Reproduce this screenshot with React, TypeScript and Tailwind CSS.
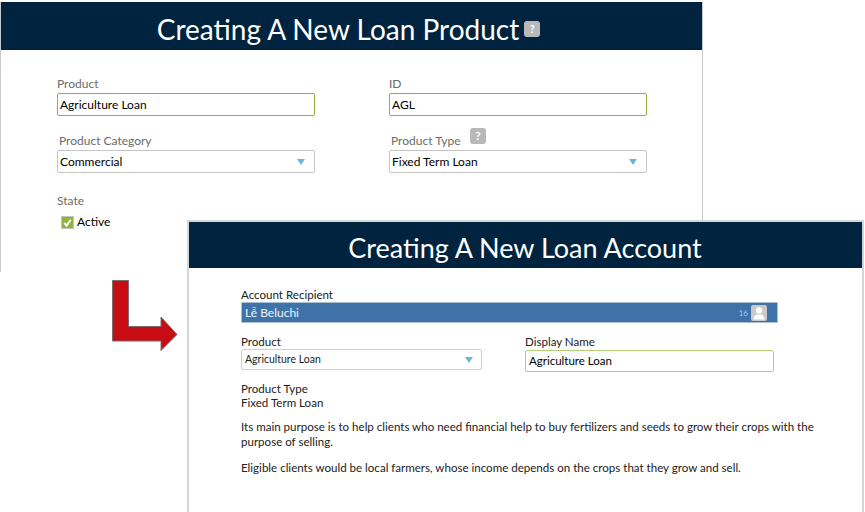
function Caret() {
  return <span className="h-0 w-0 border-x-[4.5px] border-t-[6px] border-x-transparent border-t-[#6db5da]" />;
}

function Help({ className }: { className: string }) {
  return (
    <span className={`flex items-center justify-center rounded-[3px] bg-[#b9b9b9] font-bold text-white ${className}`}>?</span>
  );
}

function Label({ children, className = "" }: { children: React.ReactNode; className?: string }) {
  return <div className={`h-[18px] text-[12px] leading-[18px] text-[#6b6b6b] ${className}`}>{children}</div>;
}

function TextBox({ value }: { value: string }) {
  return (
    <div className="flex h-[23px] items-center rounded-[2px] border border-[#8fb53c] bg-white px-[2px] text-[12px] text-black">
      {value}
    </div>
  );
}

function SelectBox({ value }: { value: string }) {
  return (
    <div className="flex h-[23px] items-center justify-between rounded-[2px] border border-[#c4c4c4] bg-white pl-[2px] pr-[9px] text-[12px] text-black">
      {value}
      <Caret />
    </div>
  );
}

function TopWindow() {
  return (
    <section className="absolute left-0 top-[2px] h-[270px] w-[703px] border-x border-[#c8c8c8] bg-white">
      <header className="flex h-[48px] items-center justify-center gap-[5px] bg-[#00243f] pr-[6px] pt-[5px] text-white">
        <h1 className="text-[28px] font-normal leading-none">Creating A New Loan Product</h1>
        <Help className="mt-[1px] h-[16px] w-[16px] text-[11px]" />
      </header>
      <div className="grid grid-cols-[258px_258px] gap-x-[74px] pl-[56px] pt-[25px]">
        <div>
          <Label>Product</Label>
          <TextBox value="Agriculture Loan" />
        </div>
        <div>
          <Label>ID</Label>
          <TextBox value="AGL" />
        </div>
        <div className="pt-[16px]">
          <Label className="pl-[2px]">Product Category</Label>
          <SelectBox value="Commercial" />
        </div>
        <div className="relative pt-[16px]">
          <Label className="pl-[2px]">Product Type</Label>
          <Help className="absolute left-[81px] top-[12px] h-[16px] w-[16px] text-[12px]" />
          <SelectBox value="Fixed Term Loan" />
        </div>
        <div className="col-span-2 pt-[19px]">
          <Label>State</Label>
          <div className="mt-[4px] flex items-center gap-[3px] pl-[4px] text-[12px] leading-[16px] text-black">
            <span className="flex h-[13px] w-[13px] items-center justify-center border border-[#c4c4c4] bg-[#8fb53c]">
              <svg viewBox="0 0 12 12" className="h-[11px] w-[11px]">
                <path d="M2.5 6.5 5 9.500 9.500 3" fill="none" stroke="white" strokeWidth="2.2" />
              </svg>
            </span>
            Active
          </div>
        </div>
      </div>
    </section>
  );
}

function Arrow() {
  return (
    <svg className="absolute left-[112px] top-[280px]" width="66" height="71" viewBox="0 0 66 71">
      <path
        d="M0.5 0.5H16.5V46.5H49V37L65 54.500 49 70.500V61H0.500Z"
        fill="#c70c14"
        stroke="#7d6a6a"
        strokeWidth="1"
      />
    </svg>
  );
}

function BottomWindow() {
  return (
    <section className="absolute left-[187px] top-[220px] h-[292px] w-[677px] border-x-2 border-t-2 border-[#d4d6d8] bg-white text-[#222]">
      <header className="flex h-[46px] items-center justify-center bg-[#00243f] pr-[1px] pt-[5px] text-white">
        <h2 className="text-[27px] font-normal leading-none">Creating A New Loan Account</h2>
      </header>
      <div className="pl-[52px] pr-[44px] pt-[20px] text-[11.55px]">
        <div className="h-[14px] leading-[14px]">Account Recipient</div>
        <div className="flex h-[21px] w-[537px] items-center justify-between rounded-[1px] border border-[#a9bfd5] bg-[#3f73a8] pl-[3px] pr-[10px]">
          <span className="text-[12px] font-normal text-[#eef3f8]">Lễ Beluchi</span>
          <span className="flex items-center gap-[3px]">
            <span className="text-[8px] text-[#a9c6e4]">16</span>
            <span className="flex h-[16px] w-[16px] items-end justify-center overflow-hidden rounded-[2px] bg-[#c9c9c9]">
              <svg viewBox="0 0 16 16" className="h-[16px] w-[16px]">
                <circle cx="8" cy="5.500" r="3.200" fill="white" />
                <path d="M2.500 14.500C2.500 10.500 5 9.500 8 9.500S13.500 10.500 13.500 14.500Z" fill="white" />
              </svg>
            </span>
          </span>
        </div>
        <div className="mt-[11px] grid grid-cols-[241px_249px] gap-x-[43px]">
          <div>
            <div className="h-[15px] leading-[15px]">Product</div>
            <div className="flex h-[21px] items-center justify-between rounded-[2px] border border-[#d0d0d0] pl-[3px] pr-[8px] text-[10.5px] text-[#222]">
              Agriculture Loan
              <Caret />
            </div>
          </div>
          <div>
            <div className="h-[15px] leading-[15px]">Display Name</div>
            <div className="mt-[1px] flex h-[22px] items-center rounded-[2px] border border-[#b4cd78] px-[3px] text-[11.5px] text-black">
              Agriculture Loan
            </div>
          </div>
        </div>
        <div className="mt-[10px] leading-[14px]">
          <div>Product Type</div>
          <div>Fixed Term Loan</div>
        </div>
        <p className="mt-[9px] leading-[15px]">
          Its main purpose is to help clients who need financial help to buy fertilizers and seeds to grow their crops with the purpose of selling.
        </p>
        <p className="mt-[11px] leading-[15px]">
          Eligible clients would be local farmers, whose income depends on the crops that they grow and sell.
        </p>
      </div>
    </section>
  );
}

export default function App() {
  return (
    <div className="relative h-[512px] w-[865px] overflow-hidden bg-white font-['Lato',sans-serif]">
      <TopWindow />
      <Arrow />
      <BottomWindow />
    </div>
  );
}
